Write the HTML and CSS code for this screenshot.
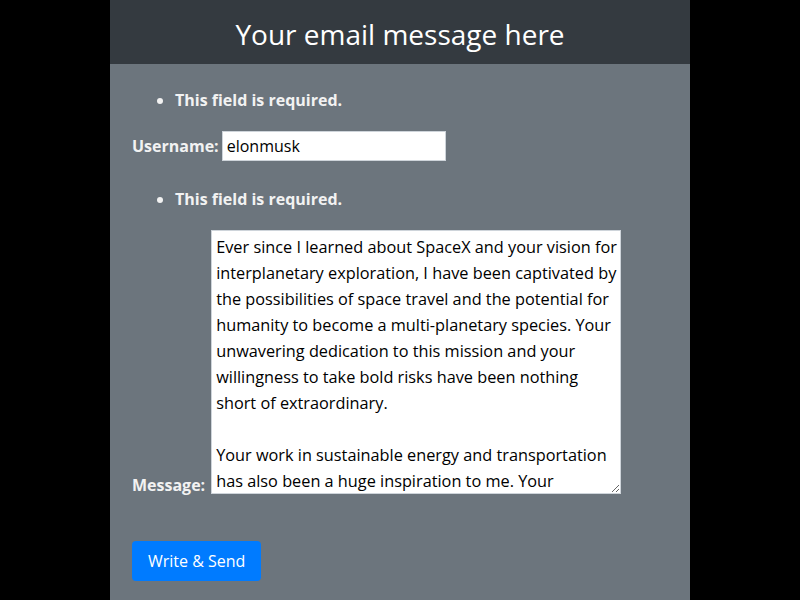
FILE: index.html
```html
<!DOCTYPE html>
<html>
<head>
<meta charset="utf-8">
<link rel="stylesheet" href="styles.css">
</head>
<body>
<div class="card">
  <header class="card-header"><h1 class="title">Your email message here</h1></header>
  <form class="form">
    <ul class="errors"><li>This field is required.</li></ul>
    <div class="row row-user">
      <label class="label" for="username">Username:</label>
      <input class="input" id="username" type="text" value="elonmusk">
    </div>
    <ul class="errors"><li>This field is required.</li></ul>
    <div class="row row-msg">
      <label class="label" for="message">Message:</label>
      <textarea class="textarea" id="message" spellcheck="false">Ever since I learned about SpaceX and your vision for interplanetary exploration, I have been captivated by the possibilities of space travel and the potential for humanity to become a multi-planetary species. Your unwavering dedication to this mission and your willingness to take bold risks have been nothing short of extraordinary.

Your work in sustainable energy and transportation has also been a huge inspiration to me. Your commitment to building a better future for all of us is truly remarkable.</textarea>
    </div>
    <button type="button" class="btn">Write &amp; Send</button>
  </form>
</div>
</body>
</html>
```
FILE: styles.css
```css
* { box-sizing: border-box; }
html, body { margin: 0; padding: 0; background: #000; }
body { font-family: "Open Sans", "Noto Sans", sans-serif; }
.card {
  width: 580px;
  height: 600px;
  margin: 0 auto;
  background: #6c757d;
  overflow: hidden;
}
.card-header {
  height: 64px;
  padding-top: 3px;
  background: #343a40;
  display: flex;
  align-items: center;
  justify-content: center;
}
.title {
  margin: 0;
  color: #fff;
  font-weight: 400;
  font-size: 28px;
}
.form { padding: 24px 22px 0; }
.errors {
  margin: 0;
  padding: 0 0 0 43px;
  color: #f2f2f2;
  font-weight: 700;
  font-size: 16px;
  line-height: 24px;
}
.row { display: flex; }
.row-user { gap: 3px; align-items: center; margin: 19px 0 26px; }
.row-msg { gap: 6px; align-items: flex-end; margin: 19px 0 47px; }
.label {
  color: #f2f2f2;
  font-weight: 700;
  font-size: 16px;
}
.label[for="message"] { margin-bottom: -2px; }
.input {
  width: 224px;
  height: 30px;
  border: 1px solid #ced4da;
  padding: 1px 4px;
  font: 16px "Open Sans", sans-serif;
  color: #000;
  background: #fff;
}
.textarea {
  width: 410px;
  height: 264px;
  border: 1px solid #ced4da;
  padding: 3px 2px 3px 4px;
  font: 16.3px/26px "Open Sans", sans-serif;
  color: #000;
  background: #fff;
  overflow: hidden;
}
.btn {
  background: #007bff;
  color: #fff;
  border: 0;
  border-radius: 4px;
  height: 40px;
  padding: 0 16px;
  font: 16px "Open Sans", sans-serif;
}
```
